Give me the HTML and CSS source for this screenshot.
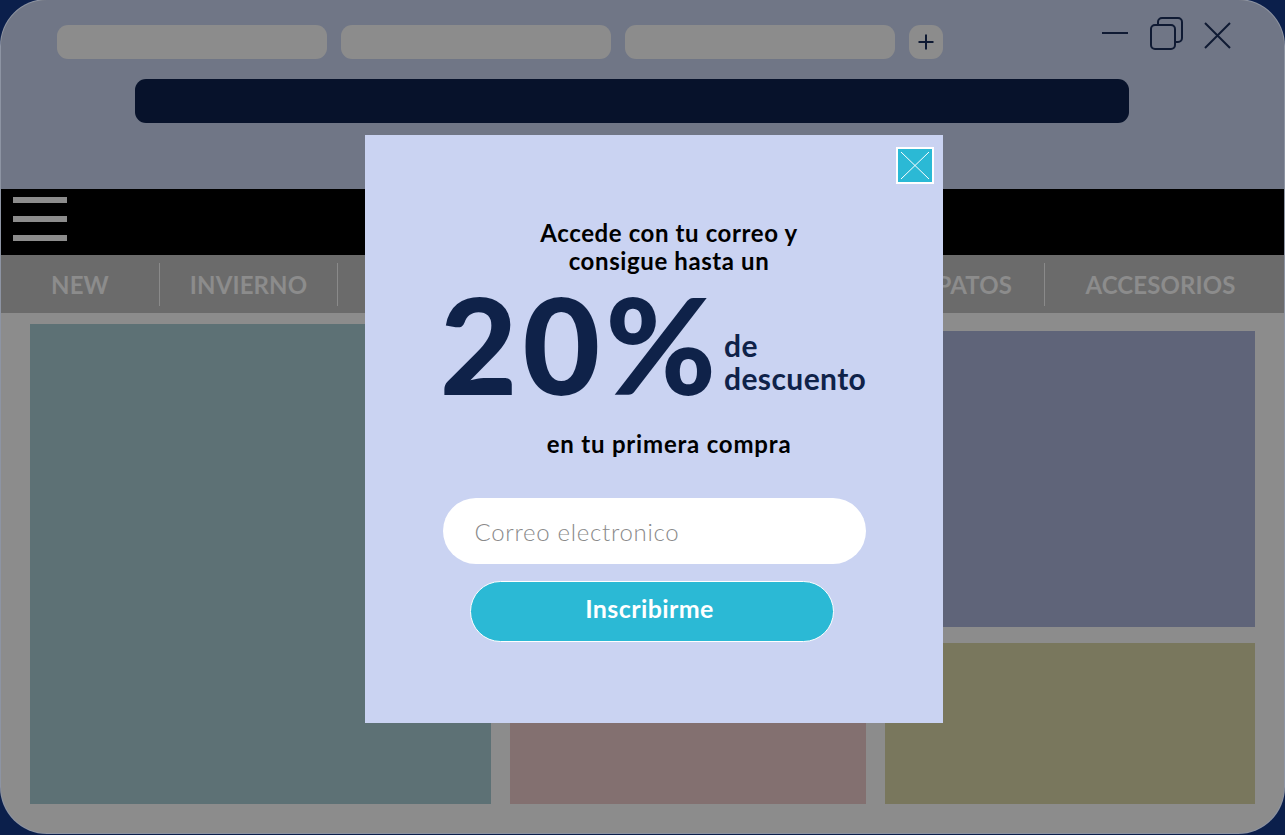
FILE: index.html
```html
<!DOCTYPE html>
<html lang="es">
<head>
<meta charset="utf-8">
<title>Suscripción</title>
<link rel="stylesheet" href="styles.css">
</head>
<body>
<div class="frame">
  <header class="chrome">
    <div class="tabrow">
      <div class="tabs">
        <div class="tab"></div>
        <div class="tab"></div>
        <div class="tab"></div>
        <div class="newtab">
          <svg width="34" height="34" viewBox="0 0 34 34"><path d="M17 9.5V24.5M9.5 17H24.5" stroke="#0f1a33" stroke-width="2"/></svg>
        </div>
      </div>
      <svg class="controls" width="130" height="33" viewBox="0 0 130 33">
        <path d="M0 16H26" stroke="#0f1a33" stroke-width="2"/>
        <rect x="56" y="1" width="24" height="24" rx="4" fill="none" stroke="#0f1a33" stroke-width="2"/>
        <rect x="49" y="8" width="24" height="24" rx="4" fill="#707686" stroke="#0f1a33" stroke-width="2"/>
        <path d="M103 6L128 31M128 6L103 31" stroke="#0f1a33" stroke-width="2"/>
      </svg>
    </div>
    <div class="address"></div>
  </header>

  <div class="topbar">
    <div class="burger"><span></span><span></span><span></span></div>
  </div>

  <nav class="menu">
    <a class="item">NEW</a>
    <a class="item">INVIERNO</a>
    <a class="item"></a>
    <a class="item"></a>
    <a class="item">ZAPATOS</a>
    <a class="item">ACCESORIOS</a>
  </nav>

  <main class="content">
    <div class="card c1"></div>
    <div class="card c2"></div>
    <div class="col">
      <div class="card c3"></div>
      <div class="card c4"></div>
    </div>
  </main>

  <section class="popup">
    <button class="close" aria-label="Cerrar">
      <svg width="34" height="33" viewBox="0 0 34 33"><path d="M3 3L31 30M31 3L3 30" stroke="#ffffff" stroke-width="1"/></svg>
    </button>
    <h2 class="title">Accede con tu correo y<br>consigue hasta un</h2>
    <div class="offer">
      <span class="pct">20%</span>
      <span class="desc">de<br>descuento</span>
    </div>
    <p class="sub">en tu primera compra</p>
    <input class="email" type="email" placeholder="Correo electronico">
    <button class="cta">Inscribirme</button>
  </section>
</div>
</body>
</html>
```

FILE: styles.css
```css
* { box-sizing: border-box; }

html, body {
  margin: 0;
  padding: 0;
  width: 1285px;
  height: 835px;
  overflow: hidden;
  background: #0b1f4b;
  font-family: "Lato", "Noto Sans", sans-serif;
}

.frame {
  position: relative;
  width: 1283px;
  height: 833px;
  margin-left: 1px;
  border-radius: 46px;
  overflow: hidden;
  background: #8c8c8c;
  display: flex;
  flex-direction: column;
  box-shadow: 0 0 0 1px #8d94a3;
}

/* ---------- browser chrome ---------- */
.chrome {
  height: 189px;
  background: #707686;
  padding-top: 17px;
  flex: none;
}

.tabrow {
  display: flex;
  align-items: flex-start;
  height: 42px;
}

.tabs {
  display: flex;
  gap: 14px;
  margin-top: 8px;
  margin-left: 56px;
}

.tab {
  width: 270px;
  height: 34px;
  border-radius: 11px;
  background: #8c8c8c;
}

.newtab {
  width: 34px;
  height: 34px;
  border-radius: 11px;
  background: #8c8c8c;
}

.newtab svg { display: block; }

.controls {
  display: block;
  margin-left: auto;
  margin-right: 52px;
}

.address {
  margin: 20px 0 0 134px;
  width: 994px;
  height: 44px;
  border-radius: 11px;
  background: #07122b;
}

/* ---------- site header ---------- */
.topbar {
  height: 66px;
  background: #000000;
  padding: 8px 0 0 12px;
  flex: none;
}

.burger {
  display: flex;
  flex-direction: column;
  gap: 13px;
  width: 54px;
}

.burger span {
  display: block;
  height: 6px;
  background: #8c8c8c;
}

.menu {
  height: 58px;
  background: #6b6b6b;
  display: grid;
  grid-template-columns: 158px 178px 267px 268px 172px 1fr;
  align-items: center;
  flex: none;
}

.item {
  height: 43px;
  display: flex;
  align-items: center;
  justify-content: center;
  color: #8c8c8c;
  font-weight: 700;
  font-size: 24px;
  letter-spacing: 0.1px;
  padding-top: 1px;
}

.item + .item { border-left: 1px solid #8a8a8a; }
.item:last-child { padding-right: 8px; }

/* ---------- content ---------- */
.content {
  flex: 1;
  display: grid;
  grid-template-columns: 461px 356px 370px;
  gap: 19px;
  padding: 11px 28px 29px 29px;
}

.card { background: #5d7175; }
.c1 { background: #5d7175; }
.c2 { background: #837070; margin-top: 7px; }
.col {
  display: flex;
  flex-direction: column;
  gap: 16px;
  margin-top: 7px;
}
.c3 { background: #5f6479; height: 296px; flex: none; }
.c4 { background: #79775d; flex: 1; }

/* ---------- popup ---------- */
.popup {
  position: absolute;
  left: 364px;
  top: 135px;
  width: 578px;
  height: 588px;
  background: #cad3f2;
  display: flex;
  flex-direction: column;
  align-items: center;
  padding-top: 84px;
}

.close {
  position: absolute;
  top: 12px;
  right: 9px;
  width: 38px;
  height: 37px;
  padding: 0;
  border: 2px solid #ffffff;
  background: #2bb9d5;
  cursor: pointer;
}

.close svg { display: block; }

.title {
  margin: 0;
  font-size: 24px;
  line-height: 28px;
  font-weight: 700;
  color: #000000;
  text-align: center;
  letter-spacing: 0.6px;
  padding-left: 30px;
}

.offer {
  display: flex;
  align-items: flex-end;
  gap: 3px;
  margin-top: 3px;
  margin-left: -2px;
}

.pct {
  font-size: 134px;
  line-height: 132px;
  font-weight: 900;
  color: #0f2249;
  letter-spacing: 5px;
}

.desc {
  font-size: 30px;
  line-height: 33px;
  font-weight: 700;
  color: #0f2249;
  letter-spacing: 0.4px;
  margin-bottom: 15px;
}

.sub {
  margin: 20px 0 0 30px;
  font-size: 24px;
  line-height: 28px;
  font-weight: 700;
  color: #000000;
  letter-spacing: 0.8px;
}

.email {
  margin-top: 40px;
  width: 423px;
  height: 66px;
  border: none;
  border-radius: 33px;
  background: #ffffff;
  padding: 0 32px;
  font-family: "Lato", "Noto Sans", sans-serif;
  font-size: 24px;
  font-weight: 300;
  letter-spacing: 0.7px;
  color: #555555;
  outline: none;
}

.email::placeholder { color: #8a8a8a; }

.cta {
  margin-top: 17px;
  margin-left: -5px;
  width: 364px;
  height: 61px;
  border: 1px solid #ffffff;
  border-radius: 31px;
  background: #2bb9d5;
  color: #ffffff;
  font-family: "Lato", "Noto Sans", sans-serif;
  font-size: 25px;
  font-weight: 700;
  letter-spacing: 0.4px;
  padding: 0 4px 7px 0;
  cursor: pointer;
}
```
